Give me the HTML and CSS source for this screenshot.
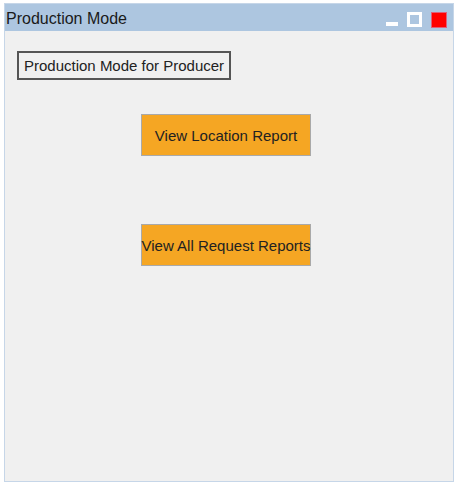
FILE: index.html
```html
<!DOCTYPE html>
<html>
<head>
<meta charset="utf-8">
<link rel="stylesheet" href="styles.css">
</head>
<body>
<div class="window">
  <div class="titlebar">
    <span class="title">Production Mode</span>
    <div class="controls">
      <span class="ctl-min"></span>
      <span class="ctl-max"></span>
      <span class="ctl-close"></span>
    </div>
  </div>
  <div class="content">
    <div class="label">Production Mode for Producer</div>
    <button class="btn btn-first">View Location Report</button>
    <button class="btn btn-second">View All Request Reports</button>
  </div>
</div>
</body>
</html>
```
FILE: styles.css
```css
html, body {
  margin: 0;
  padding: 0;
  background: #ffffff;
}
body {
  font-family: "Liberation Sans", Arial, sans-serif;
  color: #222;
}
.window {
  margin: 3px 0 0 4px;
  width: 450px;
  height: 479px;
  box-sizing: border-box;
  border: 1px solid #c6d6e8;
  background: #f0f0f0;
  display: flex;
  flex-direction: column;
}
.titlebar {
  height: 27px;
  background: #adc6e0;
  display: flex;
  align-items: center;
  justify-content: space-between;
  padding: 0 6px 0 1px;
}
.title {
  font-size: 16px;
  color: #1a1a1a;
  padding-top: 3px;
}
.controls {
  display: flex;
  align-items: flex-end;
  height: 16px;
  padding-top: 5px;
}
.ctl-min {
  width: 12px;
  height: 4px;
  background: #ffffff;
  margin-bottom: 2px;
  margin-right: 9px;
}
.ctl-max {
  width: 15px;
  height: 15px;
  box-sizing: border-box;
  border: 3px solid #ffffff;
  margin-bottom: 1px;
  margin-right: 9px;
}
.ctl-close {
  width: 16px;
  height: 16px;
  box-sizing: border-box;
  background: #ff0000;
  border: 1px solid #e0607a;
}
.content {
  flex: 1;
  padding: 20px 0 0 12px;
  display: flex;
  flex-direction: column;
  align-items: flex-start;
}
.label {
  box-sizing: border-box;
  height: 29px;
  width: 214px;
  border: 2px solid #555;
  font-size: 15px;
  line-height: 25px;
  padding-left: 5px;
  color: #222;
}
.btn {
  box-sizing: border-box;
  width: 170px;
  height: 42px;
  margin-left: 124px;
  background: #f5a623;
  border: 1px solid #a9a9a9;
  font-family: "Liberation Sans", Arial, sans-serif;
  font-size: 15px;
  color: #222;
  padding: 0;
  display: flex;
  align-items: center;
  justify-content: center;
  white-space: nowrap;
}
.btn-first {
  margin-top: 34px;
}
.btn-second {
  margin-top: 68px;
}
```
